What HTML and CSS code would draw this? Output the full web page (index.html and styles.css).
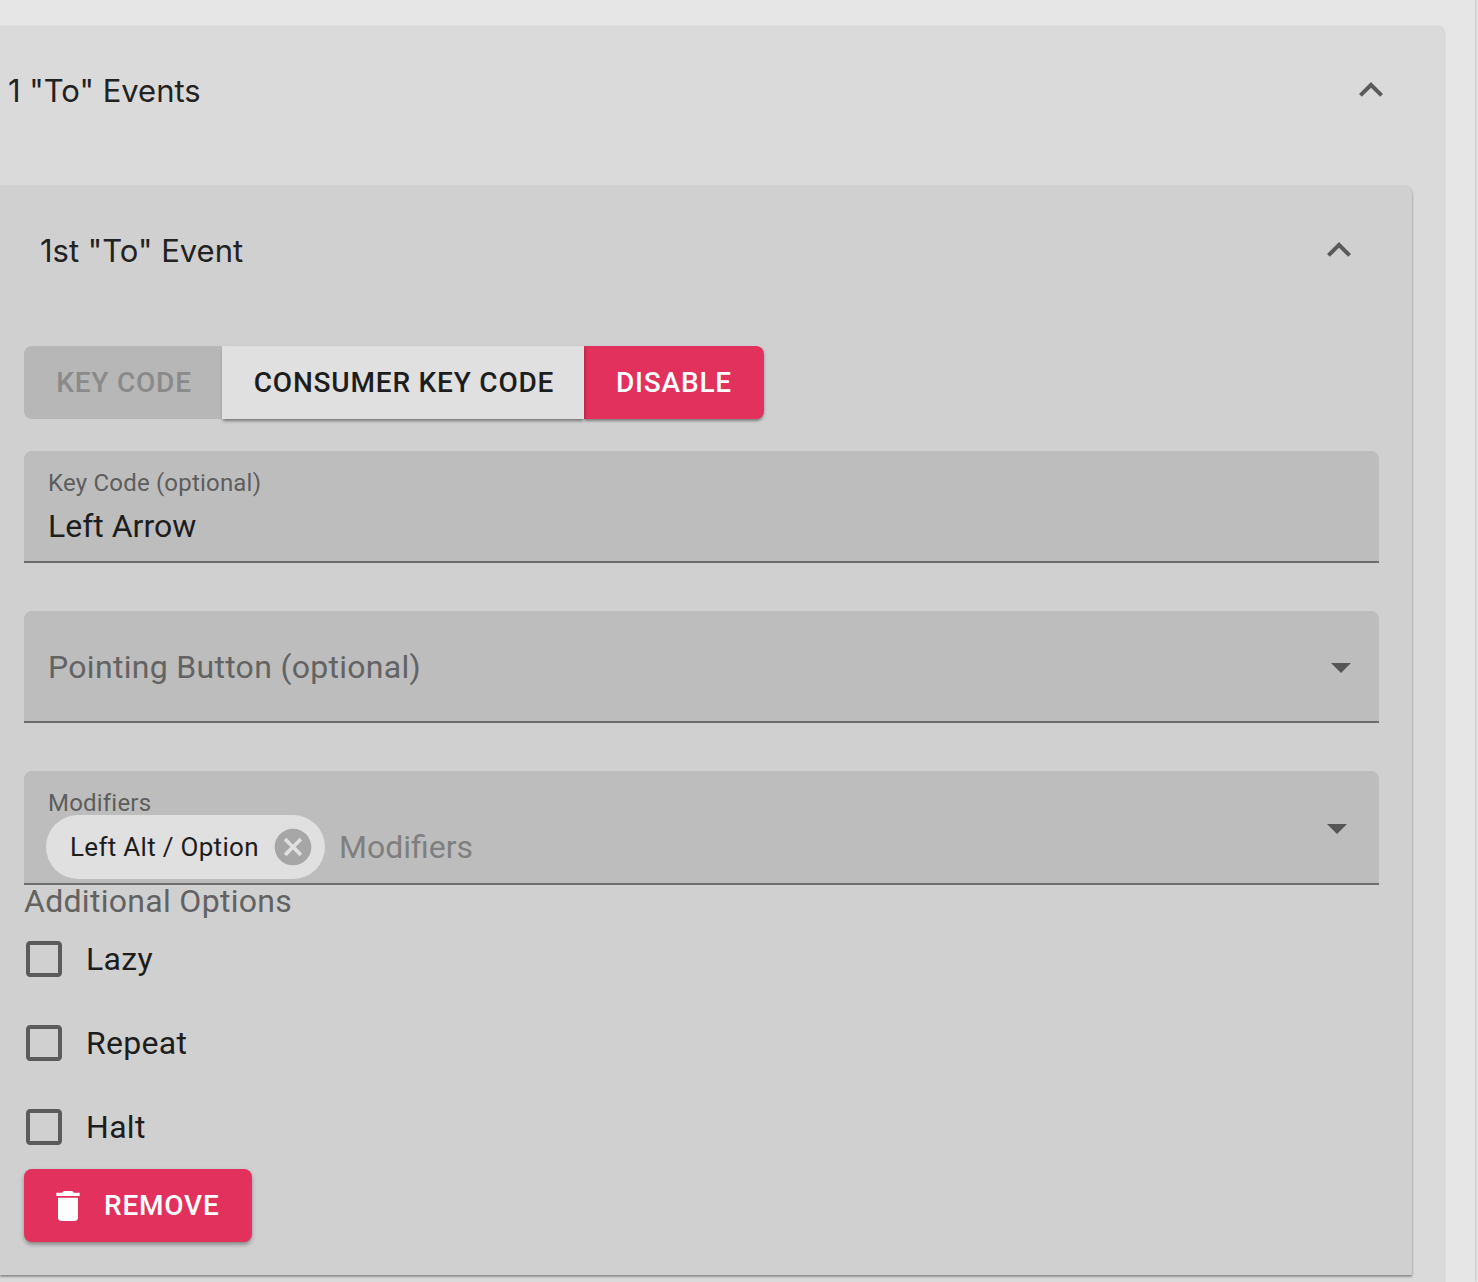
FILE: index.html
```html
<!DOCTYPE html>
<html lang="en">
<head>
<meta charset="utf-8">
<title>To Events</title>
<link rel="stylesheet" href="styles.css">
</head>
<body>
<div class="page">
  <section class="outer-card">
    <header class="outer-head">
      <span class="heading">1 "To" Events</span>
      <svg class="chevron" viewBox="0 0 24 24"><path d="M12 8l-6 6 1.41 1.41L12 10.83l4.59 4.58L18 14z"/></svg>
    </header>
    <section class="inner-card">
      <header class="inner-head">
        <span class="heading">1st "To" Event</span>
        <svg class="chevron" viewBox="0 0 24 24"><path d="M12 8l-6 6 1.41 1.41L12 10.83l4.59 4.58L18 14z"/></svg>
      </header>
      <div class="btn-group">
        <button class="seg seg-disabled">Key Code</button>
        <button class="seg seg-light">Consumer Key Code</button>
        <button class="seg seg-pink">Disable</button>
      </div>
      <div class="field field-text">
        <span class="label">Key Code (optional)</span>
        <span class="value">Left Arrow</span>
      </div>
      <div class="field field-select">
        <span class="placeholder-main">Pointing Button (optional)</span>
        <svg class="caret" viewBox="0 0 24 24"><path d="M7 10l5 5 5-5z"/></svg>
      </div>
      <div class="field field-multi">
        <div class="multi-body">
          <span class="label">Modifiers</span>
          <div class="multi-row">
            <span class="chip">
              <span class="chip-text">Left Alt / Option</span>
              <svg class="chip-x" viewBox="0 0 24 24"><path d="M12 2C6.47 2 2 6.47 2 12s4.47 10 10 10 10-4.47 10-10S17.53 2 12 2zm5 13.59L15.59 17 12 13.41 8.41 17 7 15.59 10.59 12 7 8.41 8.41 7 12 10.59 15.59 7 17 8.41 13.41 12 17 15.59z"/></svg>
            </span>
            <span class="multi-placeholder">Modifiers</span>
          </div>
        </div>
        <svg class="caret" viewBox="0 0 24 24"><path d="M7 10l5 5 5-5z"/></svg>
      </div>
      <div class="options-title">Additional Options</div>
      <div class="options">
        <label class="option"><svg class="check" viewBox="0 0 24 24"><path d="M19 5v14H5V5h14m0-2H5c-1.1 0-2 .9-2 2v14c0 1.1.9 2 2 2h14c1.1 0 2-.9 2-2V5c0-1.1-.9-2-2-2z"/></svg><span>Lazy</span></label>
        <label class="option"><svg class="check" viewBox="0 0 24 24"><path d="M19 5v14H5V5h14m0-2H5c-1.1 0-2 .9-2 2v14c0 1.1.9 2 2 2h14c1.1 0 2-.9 2-2V5c0-1.1-.9-2-2-2z"/></svg><span>Repeat</span></label>
        <label class="option"><svg class="check" viewBox="0 0 24 24"><path d="M19 5v14H5V5h14m0-2H5c-1.1 0-2 .9-2 2v14c0 1.1.9 2 2 2h14c1.1 0 2-.9 2-2V5c0-1.1-.9-2-2-2z"/></svg><span>Halt</span></label>
      </div>
      <button class="remove">
        <svg class="trash" viewBox="0 0 24 24"><path d="M6 19c0 1.1.9 2 2 2h8c1.1 0 2-.9 2-2V7H6v12zM19 4h-3.5l-1-1h-5l-1 1H5v2h14V4z"/></svg>
        <span>Remove</span>
      </button>
    </section>
  </section>
</div>
</body>
</html>
```
FILE: styles.css
```css
* { box-sizing: border-box; }
html, body { margin: 0; height: 1282px; overflow: hidden; background: #e6e6e6; }
body { font-family: Roboto, "Liberation Sans", sans-serif; color: #1d1d1d; }

.page {
  width: 1475px;
  height: 1282px;
  padding-top: 26px;
  background: #e6e6e6;
  box-shadow: 1px 0 2px rgba(0,0,0,.14);
  overflow: hidden;
}

.outer-card {
  width: 1444px;
  height: 1300px;
  background: #dadada;
  border-radius: 0 8px 0 0;
  box-shadow: 1px 0 2px rgba(0,0,0,.1);
}
.outer-head {
  height: 160px;
  padding: 40px 49px 0 8px;
  display: flex;
  justify-content: space-between;
  align-items: flex-start;
}
.heading {
  font-family: Inter, Roboto, sans-serif;
  font-size: 31px;
  line-height: 48px;
  letter-spacing: 0;
  margin-top: 1px;
  color: #222;
}
.chevron { width: 48px; height: 48px; fill: #5a5a5a; flex: none; }

.inner-card {
  width: 1412px;
  height: 1089px;
  padding: 0 33px 0 24px;
  background: #d0d0d0;
  border-radius: 0 8px 0 0;
  box-shadow: 0 2px 2px rgba(0,0,0,.32), 1px 0 2px rgba(0,0,0,.1);
}
.inner-head {
  height: 160px;
  padding: 40px 16px 0 16px;
  display: flex;
  justify-content: space-between;
  align-items: flex-start;
}

.btn-group {
  display: inline-flex;
  height: 73px;
  border-radius: 8px;
  vertical-align: top;
}
.seg {
  height: 73px;
  padding: 0;
  border: 0;
  font-family: inherit;
  font-size: 28px;
  font-weight: 500;
  letter-spacing: .8px;
  text-transform: uppercase;
  white-space: nowrap;
}
.seg-disabled { width: 198px; padding-left: 2px; background: #b7b7b7; color: #8a8a8a; border-radius: 8px 0 0 8px; }
.seg-light { width: 362px; padding-left: 2px; background: #e0e0e0; color: #1d1d1d; box-shadow: 0 3px 3px -1px rgba(0,0,0,.38), 2px 1px 3px rgba(0,0,0,.12); position: relative; }
.seg-pink { width: 180px; background: #e1315c; color: #fff; border-radius: 0 8px 8px 0; box-shadow: 0 3px 3px -1px rgba(0,0,0,.35), 1px 1px 3px rgba(0,0,0,.12); }

.field {
  width: 1355px;
  background: #bdbdbd;
  border-radius: 8px 8px 0 0;
  border-bottom: 2px solid #6d6d6d;
}
.field-text {
  height: 112px;
  margin-top: 32px;
  padding: 16px 24px 0;
  display: flex;
  flex-direction: column;
}
.label {
  font-size: 24px;
  line-height: 32px;
  letter-spacing: .2px;
  color: #5d5d5d;
}
.value {
  font-size: 32px;
  line-height: 44px;
  letter-spacing: 0;
  margin-top: 5px;
}
.field-select {
  height: 112px;
  margin-top: 48px;
  padding: 2px 14px 0 24px;
  display: flex;
  align-items: center;
  justify-content: space-between;
}
.placeholder-main {
  font-size: 32px;
  letter-spacing: .3px;
  color: #636363;
}
.caret { width: 48px; height: 48px; fill: #565656; flex: none; }

.field-multi {
  height: 114px;
  margin-top: 48px;
  padding: 0 18px 0 22px;
  display: flex;
  justify-content: space-between;
  align-items: flex-start;
}
.field-multi .caret { margin-top: 33px; }
.multi-body { display: flex; flex-direction: column; }
.multi-body .label { margin: 16px 0 0 2px; line-height: 32px; height: 28px; }
.multi-row { display: flex; align-items: center; }
.chip {
  display: flex;
  align-items: center;
  height: 64px;
  width: 279px;
  padding: 0 10px 0 24px;
  border-radius: 32px;
  background: #e0e0e0;
  justify-content: space-between;
}
.chip-text { font-size: 26px; letter-spacing: .3px; white-space: nowrap; }
.chip-x { width: 44px; height: 44px; fill: #a6a6a6; flex: none; }
.multi-placeholder {
  margin-left: 14px;
  font-size: 32px;
  letter-spacing: 0;
  color: #7f7f7f;
}

.options-title {
  height: 32px;
  font-size: 32px;
  line-height: 32px;
  letter-spacing: .3px;
  color: #626262;
}
.options { display: flex; flex-direction: column; }
.option {
  display: flex;
  align-items: center;
  height: 84px;
  font-size: 32px;
  letter-spacing: .3px;
}
.check { width: 48px; height: 48px; margin-right: 18px; margin-left: -4px; fill: #5b5b5b; flex: none; }

.remove {
  display: flex;
  align-items: center;
  height: 73px;
  width: 228px;
  padding: 0 32px 0 24px;
  border: 0;
  border-radius: 8px;
  background: #e1315c;
  color: #fff;
  font-family: inherit;
  font-size: 28px;
  font-weight: 500;
  letter-spacing: .8px;
  text-transform: uppercase;
  box-shadow: 0 3px 4px -1px rgba(0,0,0,.3), 0 2px 5px rgba(0,0,0,.14);
}
.trash { width: 40px; height: 40px; margin-right: 16px; fill: #fff; flex: none; }
```
